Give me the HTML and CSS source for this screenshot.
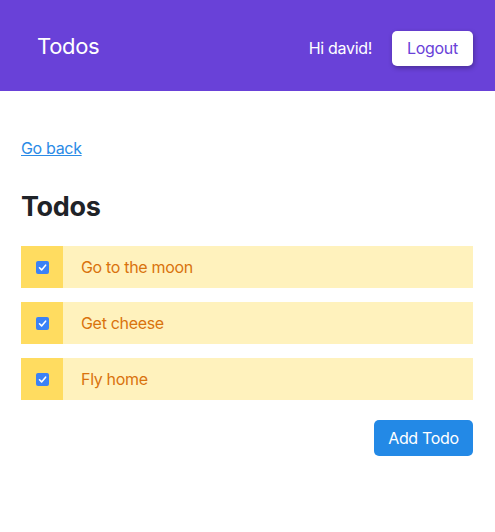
FILE: index.html
```html
<!DOCTYPE html>
<html>
<head>
<meta charset="utf-8">
<link rel="stylesheet" href="styles.css">
</head>
<body>
<header class="topbar">
  <div class="brand">Todos</div>
  <div class="user">
    <span class="greeting">Hi david!</span>
    <button class="logout">Logout</button>
  </div>
</header>
<main class="content">
  <a class="back" href="#">Go back</a>
  <h1 class="title">Todos</h1>
  <ul class="todos">
    <li class="todo">
      <span class="check-cell"><span class="check"><svg viewBox="0 0 13 13" width="13" height="13"><path d="M3.5 6.8 L5.6 8.9 L9.6 4.2" fill="none" stroke="#fff" stroke-width="1.6" stroke-linecap="round" stroke-linejoin="round"/></svg></span></span>
      <span class="label">Go to the moon</span>
    </li>
    <li class="todo">
      <span class="check-cell"><span class="check"><svg viewBox="0 0 13 13" width="13" height="13"><path d="M3.5 6.8 L5.6 8.9 L9.6 4.2" fill="none" stroke="#fff" stroke-width="1.6" stroke-linecap="round" stroke-linejoin="round"/></svg></span></span>
      <span class="label">Get cheese</span>
    </li>
    <li class="todo">
      <span class="check-cell"><span class="check"><svg viewBox="0 0 13 13" width="13" height="13"><path d="M3.5 6.8 L5.6 8.9 L9.6 4.2" fill="none" stroke="#fff" stroke-width="1.6" stroke-linecap="round" stroke-linejoin="round"/></svg></span></span>
      <span class="label">Fly home</span>
    </li>
  </ul>
  <div class="actions">
    <button class="add">Add Todo</button>
  </div>
</main>
</body>
</html>
```
FILE: styles.css
```css
* { box-sizing: border-box; }
body {
  margin: 0;
  font-family: Inter, "Noto Sans", sans-serif;
  letter-spacing: -0.02em;
  background: #fff;
  color: #1f2328;
}
.topbar {
  height: 91px;
  background: #6941d8;
  display: flex;
  align-items: center;
  justify-content: space-between;
  padding: 0 22px 0 37px;
  color: #fff;
}
.brand {
  font-size: 22px;
  font-weight: 400;
}
.user {
  display: flex;
  align-items: center;
  gap: 20px;
  margin-top: 5px;
}
.greeting { font-size: 16px; }
.logout {
  font-family: inherit;
  letter-spacing: inherit;
  font-size: 16px;
  color: #6941d8;
  background: #fff;
  border: none;
  border-radius: 5px;
  width: 81px;
  height: 35px;
  padding: 0;
  box-shadow: 1px 2px 5px rgba(0,0,0,0.3);
}
.content {
  padding: 47px 22px 0 21px;
}
.back {
  display: inline-block;
  font-size: 16px;
  color: #2b8be6;
  text-decoration: underline;
  line-height: 20px;
}
.title {
  margin: 33px 0 23px;
  font-size: 27px;
  font-weight: 700;
  line-height: 32px;
  color: #1f2328;
}
.todos {
  list-style: none;
  margin: 0;
  padding: 0;
  display: flex;
  flex-direction: column;
  gap: 14px;
}
.todo {
  display: flex;
  height: 42px;
  background: #fff2bd;
  align-items: stretch;
}
.check-cell {
  width: 42px;
  background: #ffdc60;
  display: flex;
  align-items: center;
  justify-content: center;
}
.check {
  width: 13px;
  height: 13px;
  background: #3b82f6;
  border-radius: 2px;
  display: flex;
}
.label {
  display: flex;
  align-items: center;
  padding-left: 18px;
  font-size: 16px;
  color: #d9730d;
}
.actions {
  display: flex;
  justify-content: flex-end;
  margin-top: 20px;
}
.add {
  font-family: inherit;
  letter-spacing: inherit;
  font-size: 16px;
  color: #fff;
  background: #2389e6;
  border: none;
  border-radius: 5px;
  width: 99px;
  height: 36px;
  padding: 0;
}
```
